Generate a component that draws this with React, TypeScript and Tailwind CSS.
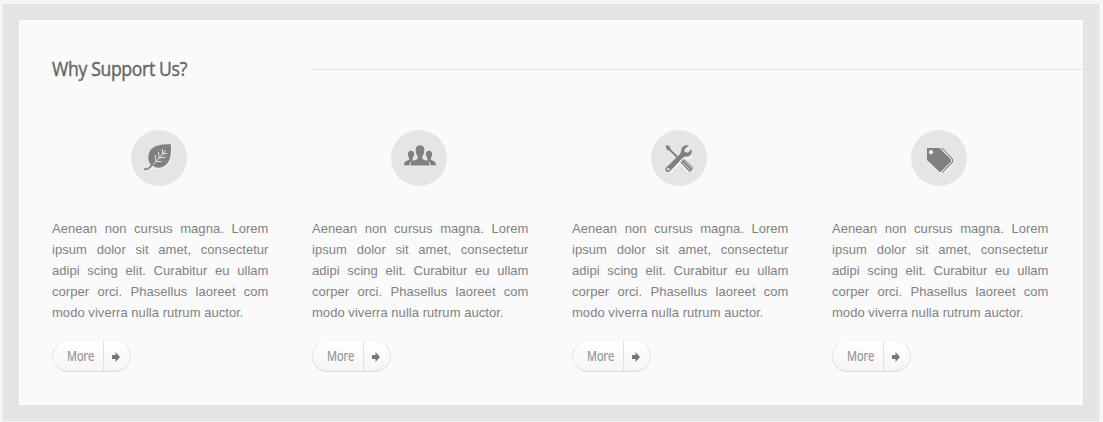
import type { ReactNode } from 'react';

const Leaf = () => (
  <svg width="28" height="28" viewBox="0 0 28 28" fill="none" className="mr-[2px]">
    <path d="M1 26.500C4 27 6.500 25 8.500 22.500L25 6" stroke="#f5f5f5" strokeWidth="1.500" />
    <path d="M27 2V9C27 18 22 24.500 14 24.500C11.500 24.500 9.500 24 8 23" stroke="#f5f5f5" strokeWidth="1.200" />
    <path d="M26.800 .2C17 .2 10.500 1.500 7 5.500C3.300 10 3.800 17 6.500 20.500L9 21.800C13 25 19.500 23.800 23 19.700C27 15 27.300 8 26.800 .2Z" fill="#808080" />
    <path d="M.5 25C3.500 26.500 6 23.500 8 21L10 18.500" stroke="#808080" strokeWidth="1.900" strokeLinecap="round" />
    <path d="M9.300 20.500L21.500 6.500M18.500 10L18.300 5M18.300 10.200L23 9.300M15 13.500L14.500 8M15 14L21.500 13.200M12 17L11.300 11M12 17.300L17.500 17.800" stroke="#e8e8e8" strokeWidth="1" />
  </svg>
);

const peoplePath =
  'M0 20.500C.2 17.500 1 16.500 3.500 15.600C5 15 5.600 14.300 5 13C3.700 11 3.500 9 4.200 7.500C5.400 5 9 5 10 7.700C10.400 9 10 11.500 8.800 13C8.200 14.500 8.700 15.200 9.500 15.700L6.500 17.300C5.700 18.200 5.400 19.200 5.400 20.500ZM32 20.500C31.800 17.500 31 16.500 28.500 15.600C27 15 26.400 14.300 27 13C28.300 11 28.500 9 27.800 7.500C26.600 5 23 5 22 7.700C21.600 9 22 11.500 23.200 13C23.800 14.500 23.300 15.200 22.500 15.700L25.500 17.300C26.300 18.200 26.600 19.200 26.600 20.500ZM6.300 20.500C6.500 17.800 7.600 16.500 10 15.500C12.700 14.500 14.400 14 13.400 11.300C12 9 11.500 6 11.900 3.500C12.500-.7 19.500-1 20.200 3.300C20.500 6 20 9 18.600 11.300C17.600 14 19.300 14.500 22 15.500C24.400 16.500 25.500 17.800 25.700 20.500Z';

const People = () => (
  <svg width="32" height="22" viewBox="0 0 32 22" className="mt-[-4px] ml-[2px]">
    <path d={peoplePath} transform="translate(0 1)" fill="#f5f5f5" />
    <path d={peoplePath} fill="#808080" />
  </svg>
);

const Tools = () => (
  <svg width="28" height="28" viewBox="0 0 28 28" fill="none" className="mt-px">
    <path d="M3 4.500L14 15.500M16 19L23 27L27.500 24M2 27L5.500 27.500L15.500 16.500M19 13.500L24 14L27 10" stroke="#f5f5f5" strokeWidth="1.300" />
    <path d="M.7 1.200L2 0L5 1.800L5.500 4L15 13.500L13.700 15L4 5.500L2 5Z" fill="#808080" />
    <path d="M15.500 17.500L19 14L28 22.500L27 25L24.500 27Z" fill="#808080" />
    <path d="M17.500 17.500L25.300 25.200M19.400 15.900L27 23.200" stroke="#ededed" strokeWidth=".8" />
    <path d="M23.800 .6C20.500-.5 16.500 1.500 16.200 5C16 7 15.800 8 14.600 9.500L1.300 22.500C-1.200 25 2 28.800 4.800 26.500L17.500 13C19 11.800 20.200 11.600 22 11.500C25.500 11.300 27.500 8 26.500 4.300L22.900 7.800L19.700 7L19.200 4.500Z" fill="#808080" />
    <circle cx="3.300" cy="24.300" r="1.200" fill="#ededed" />
  </svg>
);

const Tags = () => (
  <svg width="28" height="26" viewBox="0 0 28 26" fill="none" className="mt-[5px] ml-[4px]">
    <path d="M13 .8H16L26.200 12V14L17 24.700" stroke="#f5f5f5" strokeWidth="2.600" />
    <path d="M14 .7H16L25.700 11.500V14L15.500 24.300" stroke="#808080" strokeWidth="1.100" />
    <path d="M1 12.500L13 24.500" stroke="#f5f5f5" strokeWidth="1.200" />
    <path d="M0 0H12.500L24 11.500V13.500L13.500 24H12.500L0 12Z" fill="#808080" />
    <circle cx="4" cy="4.200" r="2.100" fill="#f5f5f5" />
  </svg>
);

const Column = ({ children }: { children: ReactNode }) => (
  <section className="flex w-[216.500px] flex-col">
    <div className="ml-[79px] flex size-14 items-center justify-center rounded-full bg-[#e5e5e5]">{children}</div>
    <p className="mt-8 text-justify text-[13px] leading-[21px] tracking-[0.045px] text-[#818181]">
      Aenean non cursus magna. Lorem ipsum dolor sit amet, consectetur adipi scing elit. Curabitur eu ullam corper orci. Phasellus laoreet com modo viverra nulla rutrum auctor.
    </p>
    <a
      href="#"
      className="mt-[17px] flex h-8 w-[79px] rounded-full border border-[#e5e5e5] border-t-[#f5f5f5] border-b-[#dedede] bg-linear-to-b from-white to-[#f5f5f5]"
    >
      <span className="flex w-[51px] items-center border-r border-[#e2e2e2] pb-px pl-[14px]">
        <span className="inline-block origin-left scale-x-[0.79] font-['Open_Sans',sans-serif] text-[14px] leading-none text-[#929292] [-webkit-text-stroke:0.2px_#929292]">More</span>
      </span>
      <span className="flex flex-1 items-center pl-2">
        <svg width="8" height="10" viewBox="0 0 8 10" className="mt-px">
          <path d="M0 3H3.500V0L8 5L3.500 10V7H0Z" fill="#777" />
        </svg>
      </span>
    </a>
  </section>
);

export default function App() {
  return (
    <div className="h-[422px] w-[1103px] bg-[#f6f6f6] pt-1 pl-[3px] font-['Liberation_Sans',Arial,sans-serif]">
      <main className="h-[417px] w-[1096px] border border-[#dedede] bg-[#e4e4e4] p-[14px] inset-shadow-[0_0_0_1px_#ebebeb]">
        <div className="mt-px ml-px h-[385px] w-[1064px] bg-[#fafafa] pl-[33px]">
          <header className="flex h-[98px] items-center">
            <h2 className="w-[260px] pb-px">
              <span className="inline-block origin-left scale-x-[0.86] font-['Open_Sans',sans-serif] text-[20.500px] font-medium tracking-[-0.4px] whitespace-nowrap text-[#666] [-webkit-text-stroke:0.45px_#666]">
                Why Support Us?
              </span>
            </h2>
            <div className="h-px flex-1 bg-[#e4e4e4]" />
          </header>
          <div className="mt-3 flex gap-[43.500px]">
            <Column><Leaf /></Column>
            <Column><People /></Column>
            <Column><Tools /></Column>
            <Column><Tags /></Column>
          </div>
        </div>
      </main>
    </div>
  );
}
